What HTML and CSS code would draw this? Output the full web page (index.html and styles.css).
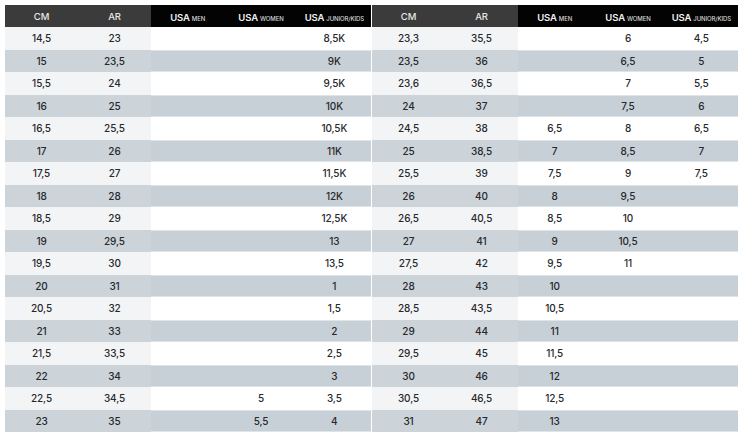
FILE: index.html
```html
<!DOCTYPE html>
<html>
<head>
<meta charset="utf-8">
<link rel="stylesheet" href="styles.css">
</head>
<body>
<div class="wrap">
  <div class="tbl">
    <div class="row head"><div class="c d">CM</div><div class="c d">AR</div><div class="c b"><span class="u">USA</span><span class="s">MEN</span></div><div class="c b"><span class="u">USA</span><span class="s">WOMEN</span></div><div class="c b"><span class="u">USA</span><span class="s">JUNIOR/KIDS</span></div></div>
    <div class="row"><div class="c l">14,5</div><div class="c l">23</div><div class="c"></div><div class="c"></div><div class="c">8,5K</div></div>
    <div class="row g"><div class="c l">15</div><div class="c l">23,5</div><div class="c"></div><div class="c"></div><div class="c">9K</div></div>
    <div class="row"><div class="c l">15,5</div><div class="c l">24</div><div class="c"></div><div class="c"></div><div class="c">9,5K</div></div>
    <div class="row g"><div class="c l">16</div><div class="c l">25</div><div class="c"></div><div class="c"></div><div class="c">10K</div></div>
    <div class="row"><div class="c l">16,5</div><div class="c l">25,5</div><div class="c"></div><div class="c"></div><div class="c">10,5K</div></div>
    <div class="row g"><div class="c l">17</div><div class="c l">26</div><div class="c"></div><div class="c"></div><div class="c">11K</div></div>
    <div class="row"><div class="c l">17,5</div><div class="c l">27</div><div class="c"></div><div class="c"></div><div class="c">11,5K</div></div>
    <div class="row g"><div class="c l">18</div><div class="c l">28</div><div class="c"></div><div class="c"></div><div class="c">12K</div></div>
    <div class="row"><div class="c l">18,5</div><div class="c l">29</div><div class="c"></div><div class="c"></div><div class="c">12,5K</div></div>
    <div class="row g"><div class="c l">19</div><div class="c l">29,5</div><div class="c"></div><div class="c"></div><div class="c">13</div></div>
    <div class="row"><div class="c l">19,5</div><div class="c l">30</div><div class="c"></div><div class="c"></div><div class="c">13,5</div></div>
    <div class="row g"><div class="c l">20</div><div class="c l">31</div><div class="c"></div><div class="c"></div><div class="c">1</div></div>
    <div class="row"><div class="c l">20,5</div><div class="c l">32</div><div class="c"></div><div class="c"></div><div class="c">1,5</div></div>
    <div class="row g"><div class="c l">21</div><div class="c l">33</div><div class="c"></div><div class="c"></div><div class="c">2</div></div>
    <div class="row"><div class="c l">21,5</div><div class="c l">33,5</div><div class="c"></div><div class="c"></div><div class="c">2,5</div></div>
    <div class="row g"><div class="c l">22</div><div class="c l">34</div><div class="c"></div><div class="c"></div><div class="c">3</div></div>
    <div class="row"><div class="c l">22,5</div><div class="c l">34,5</div><div class="c"></div><div class="c">5</div><div class="c">3,5</div></div>
    <div class="row g"><div class="c l">23</div><div class="c l">35</div><div class="c"></div><div class="c">5,5</div><div class="c">4</div></div>
  </div>
  <div class="tbl">
    <div class="row head"><div class="c d">CM</div><div class="c d">AR</div><div class="c b"><span class="u">USA</span><span class="s">MEN</span></div><div class="c b"><span class="u">USA</span><span class="s">WOMEN</span></div><div class="c b"><span class="u">USA</span><span class="s">JUNIOR/KIDS</span></div></div>
    <div class="row"><div class="c l">23,3</div><div class="c l">35,5</div><div class="c"></div><div class="c">6</div><div class="c">4,5</div></div>
    <div class="row g"><div class="c l">23,5</div><div class="c l">36</div><div class="c"></div><div class="c">6,5</div><div class="c">5</div></div>
    <div class="row"><div class="c l">23,6</div><div class="c l">36,5</div><div class="c"></div><div class="c">7</div><div class="c">5,5</div></div>
    <div class="row g"><div class="c l">24</div><div class="c l">37</div><div class="c"></div><div class="c">7,5</div><div class="c">6</div></div>
    <div class="row"><div class="c l">24,5</div><div class="c l">38</div><div class="c">6,5</div><div class="c">8</div><div class="c">6,5</div></div>
    <div class="row g"><div class="c l">25</div><div class="c l">38,5</div><div class="c">7</div><div class="c">8,5</div><div class="c">7</div></div>
    <div class="row"><div class="c l">25,5</div><div class="c l">39</div><div class="c">7,5</div><div class="c">9</div><div class="c">7,5</div></div>
    <div class="row g"><div class="c l">26</div><div class="c l">40</div><div class="c">8</div><div class="c">9,5</div><div class="c"></div></div>
    <div class="row"><div class="c l">26,5</div><div class="c l">40,5</div><div class="c">8,5</div><div class="c">10</div><div class="c"></div></div>
    <div class="row g"><div class="c l">27</div><div class="c l">41</div><div class="c">9</div><div class="c">10,5</div><div class="c"></div></div>
    <div class="row"><div class="c l">27,5</div><div class="c l">42</div><div class="c">9,5</div><div class="c">11</div><div class="c"></div></div>
    <div class="row g"><div class="c l">28</div><div class="c l">43</div><div class="c">10</div><div class="c"></div><div class="c"></div></div>
    <div class="row"><div class="c l">28,5</div><div class="c l">43,5</div><div class="c">10,5</div><div class="c"></div><div class="c"></div></div>
    <div class="row g"><div class="c l">29</div><div class="c l">44</div><div class="c">11</div><div class="c"></div><div class="c"></div></div>
    <div class="row"><div class="c l">29,5</div><div class="c l">45</div><div class="c">11,5</div><div class="c"></div><div class="c"></div></div>
    <div class="row g"><div class="c l">30</div><div class="c l">46</div><div class="c">12</div><div class="c"></div><div class="c"></div></div>
    <div class="row"><div class="c l">30,5</div><div class="c l">46,5</div><div class="c">12,5</div><div class="c"></div><div class="c"></div></div>
    <div class="row g"><div class="c l">31</div><div class="c l">47</div><div class="c">13</div><div class="c"></div><div class="c"></div></div>
  </div>
</div>
</body>
</html>
```

FILE: styles.css
```css
html, body {
  margin: 0;
  padding: 0;
  background: #ffffff;
}
body {
  font-family: Inter, "Liberation Sans", sans-serif;
  color: #26282b;
}
.wrap {
  display: flex;
  gap: 1px;
  padding: 5px 6px 0 5px;
}
.tbl {
  width: 366px;
  display: flex;
  flex-direction: column;
}
.row {
  display: grid;
  grid-template-columns: 73px 73px repeat(3, 1fr);
  height: 22.5px;
  background: #ffffff;
}
.row.head {
  height: 22px;
}
.c {
  display: flex;
  align-items: center;
  justify-content: center;
  font-size: 10px;
  font-weight: 500;
  letter-spacing: -0.1px;
}
.c.l {
  background: #f3f4f6;
}
.row.g {
  background: #c8d0d7;
  box-shadow: inset 0 1px 0 #dfe4e8, inset 0 -1px 0 #dfe4e8;
}
.row.g .c.l {
  background: #ccd3d9;
}
.head .c {
  color: #e6e6e6;
  font-weight: 500;
  font-size: 9.5px;
}
.head .c.d {
  background: #3b3b3b;
}
.head .c.b {
  background: #030303;
  align-items: baseline;
  padding-top: 7px;
}
.head .u {
  font-weight: 600;
  font-size: 9.5px;
  color: #f0f0f0;
  margin-right: 2px;
}
.head .s {
  font-size: 6px;
  font-weight: 500;
  color: #d6d6d6;
  letter-spacing: -0.1px;
}
```
